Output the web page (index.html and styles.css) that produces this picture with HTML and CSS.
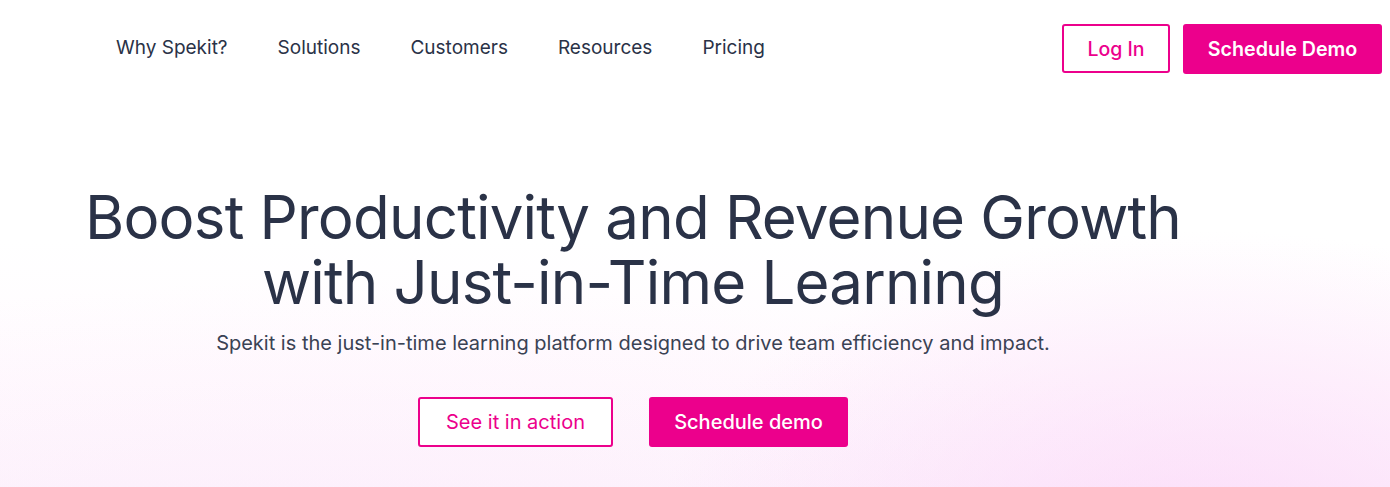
FILE: index.html
```html
<!DOCTYPE html>
<html lang="en">
<head>
<meta charset="utf-8">
<title>Spekit</title>
<link rel="stylesheet" href="styles.css">
</head>
<body>
<div class="page">
  <header class="header">
    <nav class="nav">
      <a class="nav-link" href="#">Why Spekit?</a>
      <a class="nav-link" href="#">Solutions</a>
      <a class="nav-link" href="#">Customers</a>
      <a class="nav-link" href="#">Resources</a>
      <a class="nav-link" href="#">Pricing</a>
    </nav>
    <div class="header-actions">
      <a class="btn btn-outline btn-login" href="#">Log In</a>
      <a class="btn btn-solid btn-demo" href="#">Schedule Demo</a>
    </div>
  </header>
  <section class="hero">
    <h1 class="hero-title">Boost Productivity and Revenue Growth<br>with Just-in-Time Learning</h1>
    <p class="hero-sub">Spekit is the just-in-time learning platform designed to drive team efficiency and impact.</p>
    <div class="hero-actions">
      <a class="btn btn-outline btn-hero-outline" href="#">See it in action</a>
      <a class="btn btn-solid btn-hero-solid" href="#">Schedule demo</a>
    </div>
  </section>
</div>
</body>
</html>
```
FILE: styles.css
```css
* { box-sizing: border-box; }
html, body { margin: 0; padding: 0; }
body {
  font-family: Inter, "Noto Sans", sans-serif;
  color: #2a3247;
  background: #ffffff;
}
.page {
  width: 1390px;
  height: 487px;
  overflow: hidden;
  background:
    radial-gradient(ellipse 560px 330px at 1210px 560px, rgba(251, 214, 248, 0.8), rgba(251, 214, 248, 0) 100%),
    radial-gradient(ellipse 1000px 300px at 350px 580px, rgba(252, 228, 250, 0.45), rgba(252, 228, 250, 0) 100%),
    linear-gradient(180deg, #ffffff 0px, #ffffff 240px, #fffafe 380px, #fdf6fd 487px);
}
a { text-decoration: none; }
.header {
  display: flex;
  justify-content: space-between;
  align-items: center;
  padding: 24px 8px 0 116px;
}
.nav {
  display: flex;
  gap: 50px;
  margin-top: -4px;
}
.nav-link {
  font-size: 19px;
  color: #2a3247;
}
.header-actions {
  display: flex;
  gap: 13px;
}
.btn {
  display: inline-flex;
  align-items: center;
  justify-content: center;
  border-radius: 3px;
}
.btn-outline {
  border: 2px solid #ec008c;
  color: #ec008c;
  background: #ffffff;
}
.btn-solid {
  background: #ec008c;
  color: #ffffff;
}
.btn-login {
  width: 108px;
  height: 49px;
  font-size: 19.5px;
  font-weight: 500;
  margin-left: 1px;
}
.btn-demo {
  width: 199px;
  height: 50px;
  font-size: 19.7px;
  font-weight: 600;
}
.hero {
  display: flex;
  flex-direction: column;
  align-items: center;
  width: 1266px;
  padding-top: 111px;
}
.hero-title {
  margin: 0;
  font-size: 60px;
  line-height: 65px;
  font-weight: 400;
  text-align: center;
  color: #2a3247;
  letter-spacing: -0.8px;
}
.hero-sub {
  margin: 14px 0 0;
  font-size: 20px;
  line-height: 28px;
  color: #3a4254;
}
.hero-actions {
  display: flex;
  gap: 36px;
  margin-top: 40px;
}
.btn-hero-outline {
  width: 195px;
  height: 50px;
  font-size: 20px;
  background: #ffffff;
}
.btn-hero-solid {
  width: 199px;
  height: 50px;
  font-size: 20px;
  font-weight: 500;
}
```
